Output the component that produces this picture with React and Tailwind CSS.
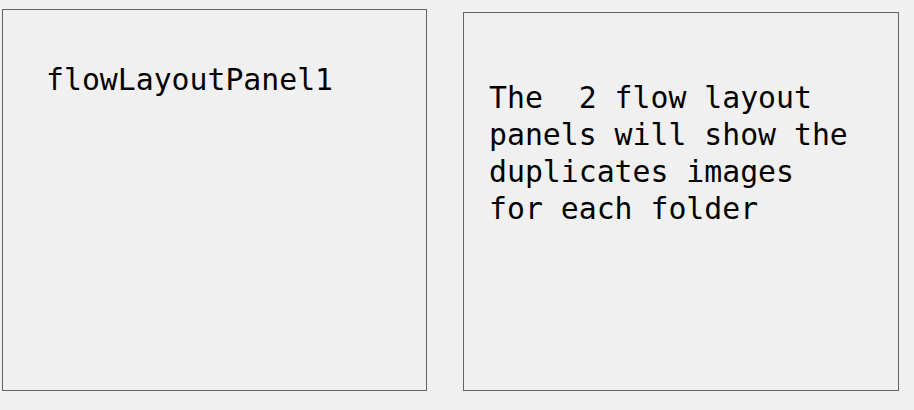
export default function App() {
  const mono = { fontFamily: '"DejaVu Sans Mono", "Liberation Mono", monospace' };
  return (
    <div className="w-[914px] h-[410px] bg-[#f0f0f0] flex items-start overflow-hidden">
      <div className="ml-[2px] mt-[9px] w-[425px] h-[382px] border border-[#646464] box-border pl-[43px] pt-[51px]">
        <div className="text-[29.8px] leading-[37px] text-black" style={mono}>flowLayoutPanel1</div>
      </div>
      <div className="ml-[36px] mt-[12px] w-[436px] h-[379px] border border-[#646464] box-border pl-[25px] pt-[66px]">
        <div className="text-[29.8px] leading-[37px] text-black whitespace-pre-wrap w-[400px]" style={mono}>
          {"The  2 flow layout\npanels will show the\nduplicates images\nfor each folder"}
        </div>
      </div>
    </div>
  );
}
